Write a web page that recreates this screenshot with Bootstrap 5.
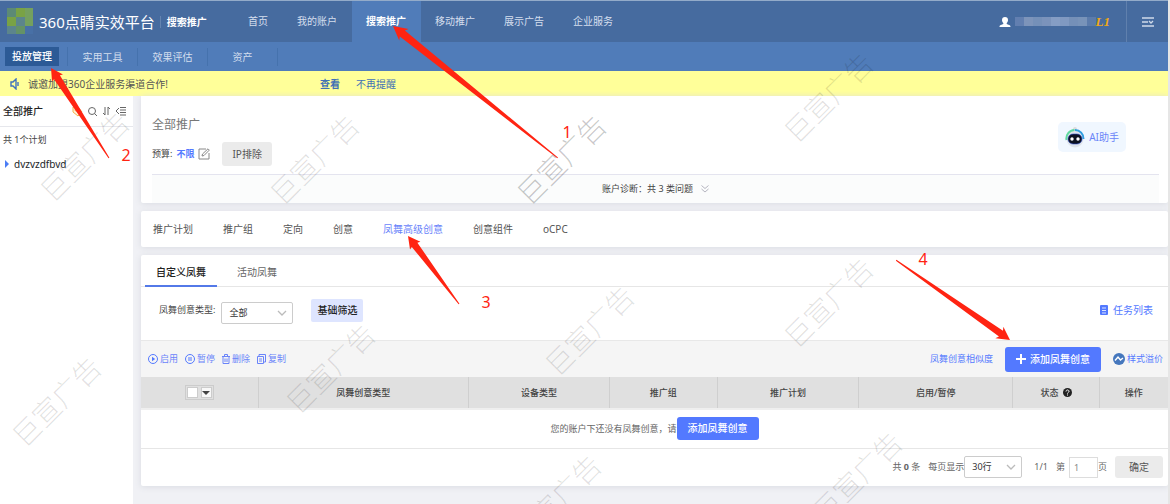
<!DOCTYPE html>
<html lang="zh-CN">
<head>
<meta charset="utf-8">
<meta name="viewport" content="width=device-width, initial-scale=1">
<title>360点睛实效平台</title>
<link href="https://cdn.jsdelivr.net/npm/bootstrap@5.3.0/dist/css/bootstrap.min.css" rel="stylesheet">
<style>
  :root { --blue: #5379ff; --nav: #466b9f; --subnav: #507cb9; --txt: #444; --muted: #666; }
  body { font-family: "Noto Sans", "Noto Sans CJK SC", sans-serif; font-size: 10px; line-height: 14px; color: var(--txt); background: #f0f1f5; }
  a { color: var(--blue); text-decoration: none; }
  button, select, input { font-family: inherit; }
  svg { flex: none; display: block; }
  .page { min-height: 100vh; border-right: 2px solid #e6e6e6; overflow: hidden; }
  .fs-s { font-size: 9px; line-height: 14px; }

  .topbar { background: var(--nav); border-top: 1px solid #93abc9; height: 42px; }
  .brand { width: 234px; padding-left: 7px; color: #fff; }
  .brand-name { font-size: 15px; line-height: 20px; margin-left: 5px; font-weight: 400; white-space: nowrap; }
  .brand-sub { margin-left: 5px; padding-left: 6px; border-left: 1px solid #6484b0; font-weight: 700; line-height: 12px; }
  .topbar .nav-link { color: #d5dfee; padding: 0 14px; line-height: 40px; border-right: 1px solid transparent; }
  .topbar .nav-link.active { background: var(--subnav); color: #fff; font-weight: 700; line-height: 41px; }
  .mosaic span { width: 9px; height: 9px; background: #7590b8; }
  .level { color: #f0a814; font: italic 700 13px/14px "Liberation Serif", serif; }
  .menu-btn { width: 42px; border: 0; border-left: 1px solid #6080ad; background: none; }

  .subbar { background: var(--subnav); height: 29px; }
  .subbar a { color: #d3deee; width: 70px; line-height: 18px; text-align: center; border-right: 1px solid #4572ad; }
  .subbar .first { width: 68px; padding: 0 8px 0 5px; }
  .subbar .first span { display: block; background: #2c5a96; color: #fff; font-weight: 500; line-height: 19px; }

  .notice { background: #ff9; height: 25px; padding-left: 10px; }
  .notice a { color: #4271b5; }
  .notice-text { width: 292px; padding-left: 8px; color: #555; }

  .sidebar { width: 133px; background: #fff; flex: none; }
  .side-head { height: 31px; padding: 0 7px 0 3px; border-bottom: 1px solid #e6e7ec; color: #222; font-weight: 500; }
  .side-count { padding: 6px 3px; }
  .main-col { padding-left: 8px; min-width: 0; }
  .panel { background: #fff; border-radius: 0 0 2px 2px; box-shadow: 0 1px 6px #d9dbe2; }
  .panel + .panel { margin-top: 8px; border-radius: 2px; }
  .summary { height: 78px; padding: 20px 42px 0 11px; }
  .panel-title { font-size: 12px; line-height: 18px; color: #777; }
  .btn-grey { background: #ebebeb; color: #555; font-size: 10px; line-height: 14px; border: 0; border-radius: 3px; padding: 5px 10px; }
  .btn-ai { background: #f0f7ff; color: #6a84f8; font-size: 10px; line-height: 14px; border: 0; border-radius: 5px; padding: 5px 7px; height: 30px; margin-top: 6px; }
  .diag { border-top: 1px solid #e4e4ef; background: #fbfcfc; height: 29px; margin: 0 9px 0 11px; }
  .scope { height: 36px; gap: 30px; padding: 0 12px; }
  .scope a { color: #555; }
  .scope a.active { color: #6a84fa; }
  .kinds { height: 32px; border-bottom: 1px solid #e6e6e6; padding: 0 4px; gap: 9px; }
  .kinds a { color: #666; padding: 0 11px; line-height: 34px; height: 32px; }
  .kinds a.active { color: #222; font-weight: 500; border-bottom: 2px solid #5379e8; }
  .filters { height: 53px; padding: 12px 15px 0 18px; }
  .filters .pick { margin: 3px 18px 0 6px; }
  .form-select.pick { width: 72px; height: 22px; font-size: 9px; line-height: 14px; padding: 3px 18px 3px 7px; color: #333; border: 1px solid #ccc; border-radius: 2px; background-position: right 5px center; background-size: 10px 10px;
    background-image: url("data:image/svg+xml,%3csvg xmlns='http://www.w3.org/2000/svg' viewBox='0 0 10 10'%3e%3cpath fill='none' stroke='%23bbb' stroke-width='1.3' d='M1 3l4 4 4-4'/%3e%3c/svg%3e"); }
  .form-select.rows { width: 58px; }
  .btn-basic { background: #dee5ff; color: #222; font-size: 10px; line-height: 13px; font-weight: 500; border: 0; border-radius: 2px; padding: 5px 6px; }
  .tools { height: 37px; border-top: 1px solid #e8e8e8; background: #f5f5f5; padding: 0 5px 0 7px; }
  .acts { gap: 7px; }
  .tools .act { background: none; border: 0; padding: 0; gap: 2px; color: #6a84fa; font-size: 9px; line-height: 14px; }
  .premium { gap: 2px; }
  .btn-main { background: var(--blue); color: #fff; font-size: 10px; line-height: 13px; font-weight: 500; border: 0; border-radius: 3px; padding: 5px 11px; }
  .btn-main.big { padding: 6px 11px; }
  .grid-table { table-layout: fixed; width: 100%; margin: 0; }
  .grid-table th { height: 32px; background: #e0e0e0; border-right: 1px solid #cfcfcf; border-bottom: 2px solid #efefef; font-size: 9px; line-height: 14px; font-weight: 500; text-align: center; color: #444; padding: 0; }
  .grid-table th:last-child { border-right: 0; }
  .grid-table td { height: 39px; padding: 0; border-bottom: 1px solid #e6e6e6; color: #666; font-size: 9px; }
  .checker { width: 29px; height: 15px; border: 1px solid #ccc; padding: 2px 1px; }
  .checker input { appearance: none; width: 11px; height: 11px; margin: 0; background: #fff; border: 1px solid #ccc; }
  .checker button { width: 11px; height: 11px; padding: 0; border: 1px solid #ccc; background: #f8f8f8; }
  .pager { height: 37px; padding: 0 5px; color: #666; }
  .pager .btn-grey { padding: 4px 14px; }
  .page-no { width: 29px; height: 21px; border: 1px solid #ddd; border-radius: 0; padding: 0 4px; font-size: 9px; color: #888; }

  .overlay-box { position: absolute; inset: 0; overflow: hidden; pointer-events: none; }
  .stamp { font: 300 28px "Noto Sans CJK SC", sans-serif; fill: #000; fill-opacity: .12; text-anchor: middle; }
  .step { font: 16px "Noto Sans", sans-serif; fill: #ff2412; text-anchor: middle; }
</style>
</head>
<body>
<div class="page d-flex flex-column position-relative">
  <header class="topbar d-flex">
    <div class="brand d-flex align-items-center">
      <svg width="27" height="27" viewBox="0 0 27 27"><path fill="#5c8a76" d="M0 0h9v9H0z"/><path fill="#79a245" d="M9 0h9v9H9zM0 9h9v9H0z"/><path fill="#75a05e" d="M18 0h8v18h-8z"/><path fill="#5c858c" d="M9 9h9v9H9zM0 18h9v8H0z"/><path fill="#649267" d="M9 18h9v8H9z"/><path fill="#4870a6" d="M18 18h8v8h-8z"/></svg>
      <span class="brand-name">360点睛实效平台</span><span class="brand-sub">搜索推广</span>
    </div>
    <nav class="d-flex flex-grow-1">
      <a class="nav-link" href="#">首页</a><a class="nav-link" href="#">我的账户</a><a class="nav-link active" href="#">搜索推广</a><a class="nav-link" href="#">移动推广</a><a class="nav-link" href="#">展示广告</a><a class="nav-link" href="#">企业服务</a>
    </nav>
    <div class="d-flex align-items-center me-3">
      <svg width="12" height="12" viewBox="0 0 12 12" fill="#fff"><path d="M6 1c2 0 3 1.300 3 3 0 1.500-.6 2.400-1.300 3v1l3 1.200c.6.300.8.800.8 1.800H.5c0-1 .2-1.500.8-1.800l3-1.200V7C3.600 6.400 3 5.500 3 4c0-1.700 1-3 3-3z"/></svg>
      <div class="mosaic d-flex ms-1">
        <span style="background:#627fb0"></span><span style="background:#7d94ba"></span><span></span><span style="background:#7b93bb"></span><span style="background:#859dc4"></span><span style="background:#8099c1"></span><span></span><span style="background:#7893b9"></span><span style="background:#5b7bab"></span>
      </div>
      <span class="level">L1</span>
    </div>
    <button class="menu-btn d-flex align-items-center justify-content-center" aria-label="菜单"><svg width="12" height="10" viewBox="0 0 12 10" fill="none" stroke="#cfdaea" stroke-width="1.300"><path d="M0 1h12M0 5h6M0 9h12M7 4l2 2 2-2"/></svg></button>
  </header>

  <nav class="subbar d-flex align-items-center">
    <a class="first" href="#"><span>投放管理</span></a><a href="#">实用工具</a><a href="#">效果评估</a><a href="#">资产</a>
  </nav>

  <div class="notice d-flex align-items-center">
    <svg width="10" height="12" viewBox="0 0 10 12" fill="none" stroke="#3f72bd" stroke-width="1.400"><path d="M1 4h2l3-3v10L3 8H1zM8 4v4"/></svg>
    <span class="notice-text">诚邀加盟360企业服务渠道合作!</span>
    <a class="fw-bold ms-2 me-3" href="#">查看</a><a href="#">不再提醒</a>
  </div>

  <div class="d-flex flex-grow-1">
    <aside class="sidebar">
      <div class="side-head d-flex align-items-center">
        <span class="me-auto">全部推广</span>
        <svg class="me-1" width="12" height="12" viewBox="0 0 12 12" fill="#fff4dc" stroke="#f3b24c"><path d="M2 2l5 0 4 5-4 4-5-4z"/><circle cx="5" cy="5" r="1"/></svg>
        <svg class="me-1" width="11" height="11" viewBox="0 0 11 11" fill="none" stroke="#666"><circle cx="5" cy="5" r="3.500"/><path d="M7.500 7.500l2.500 2.500"/></svg>
        <svg class="me-1" width="9" height="10" viewBox="0 0 9 10" fill="none" stroke="#666"><path d="M3 1v8L1 7M6 9V1l2 2"/></svg>
        <svg width="11" height="10" viewBox="0 0 11 10" fill="none" stroke="#666"><path d="M4 2L1 5l3 3M5 1.500h6M5 4h6M5 6.500h6M5 9h6"/></svg>
      </div>
      <div class="fs-s side-count">共 1个计划</div>
      <a href="#" class="d-flex align-items-center ps-1 pt-1 text-dark"><svg class="me-1" width="6" height="8" viewBox="0 0 6 8"><path fill="#4b7df5" d="M1 0l4 4-4 4z"/></svg>dvzvzdfbvd</a>
    </aside>

    <main class="main-col flex-grow-1">
      <section class="panel">
        <div class="summary d-flex justify-content-between align-items-start">
          <div>
            <div class="panel-title">全部推广</div>
            <div class="d-flex align-items-center fs-s mt-2">预算:<a class="fw-bold mx-1" href="#">不限</a>
              <svg class="me-2" width="12" height="12" viewBox="0 0 12 12" fill="none" stroke="#888"><path d="M8 1H1v10h10V5M4 8l.5-2L10 .8l1.300 1.300L6 7.500z"/></svg>
              <button class="btn-grey ms-1">IP排除</button></div>
          </div>
          <button class="btn-ai d-flex align-items-center">
            <svg class="me-1" width="20" height="22" viewBox="0 0 20 22"><circle cx="10" cy="3" r="2" fill="#ddd"/><circle cx="10" cy="13" r="8.500" fill="#dfe4ea"/><path d="M1.500 14a8.500 8.500 0 0 1 8-10" fill="none" stroke="#5fd9a0" stroke-width="2"/><path d="M10 4a8.500 8.500 0 0 1 8.500 9" fill="none" stroke="#2f9ee0" stroke-width="2"/><rect x="3" y="8" width="14" height="10" rx="5" fill="#0b1020" stroke="#2b49c9" stroke-width=".6"/><circle cx="7" cy="13" r="1.700" fill="#fff"/><circle cx="13" cy="13" r="1.700" fill="#fff"/></svg>AI助手</button>
        </div>
        <div class="diag d-flex align-items-center justify-content-center fs-s">账户诊断：共 3 类问题
          <svg class="ms-2" width="8" height="8" viewBox="0 0 8 8" fill="none" stroke="#b5b5c0"><path d="M.5.500L4 3.500 7.500.500M.5 4L4 7l3.500-3"/></svg></div>
      </section>

      <nav class="panel scope d-flex align-items-center">
        <a href="#">推广计划</a><a href="#">推广组</a><a href="#">定向</a><a href="#">创意</a><a class="active" href="#">凤舞高级创意</a><a href="#">创意组件</a><a href="#">oCPC</a>
      </nav>

      <section class="panel">
        <nav class="kinds d-flex"><a class="active" href="#">自定义凤舞</a><a href="#">活动凤舞</a></nav>
        <div class="filters d-flex align-items-start">
          <label class="fs-s pt-1" for="kind">凤舞创意类型:</label>
          <select id="kind" class="form-select pick"><option>全部</option></select>
          <button class="btn-basic">基础筛选</button>
          <a class="ms-auto d-flex align-items-center pt-1" href="#"><svg class="me-1" width="10" height="10" viewBox="0 0 10 10"><rect x="1" width="8" height="10" rx="1" fill="#5379ff"/><path stroke="#fff" d="M3 3h4M3 5.500h4M3 8h4" stroke-width=".8"/></svg>任务列表</a>
        </div>
        <div class="tools d-flex align-items-center">
          <div class="acts d-flex">
            <button class="act d-flex align-items-center"><svg width="10" height="10" viewBox="0 0 10 10" fill="none" stroke="#5379ff"><circle cx="5" cy="5" r="4.500"/><path fill="#5379ff" stroke="none" d="M4 2.800L7.200 5 4 7.200z"/></svg>启用</button>
            <button class="act d-flex align-items-center"><svg width="10" height="10" viewBox="0 0 10 10" fill="none" stroke="#5379ff"><circle cx="5" cy="5" r="4.500"/><path d="M4 3v4M6 3v4"/></svg>暂停</button>
            <button class="act d-flex align-items-center"><svg width="8" height="10" viewBox="0 0 8 10" fill="none" stroke="#6a84fa"><path d="M0 2.500h8M2.500 2V.5h3V2M1 3v6.500h6V3M3 4.500V8M5 4.500V8"/></svg>删除</button>
            <button class="act d-flex align-items-center"><svg width="9" height="10" viewBox="0 0 9 10" fill="none" stroke="#6a84fa"><path d="M2 2V.5h6.500V8H7M.5 2.500h6v7h-6zM2 5h3M2 7h3"/></svg>复制</button>
          </div>
          <a class="fs-s ms-auto me-2" href="#">凤舞创意相似度</a>
          <button class="btn-main big d-flex align-items-center mx-1"><svg class="me-1" width="10" height="10" viewBox="0 0 10 10" stroke="#fff" stroke-width="2"><path d="M5 0v10M0 5h10"/></svg>添加凤舞创意</button>
          <a class="fs-s premium d-flex align-items-center ms-2" href="#"><svg width="12" height="12" viewBox="0 0 12 12"><circle cx="6" cy="6" r="6" fill="#4577bd"/><path d="M2 7.500L5 4l2.500 3L10 5" fill="none" stroke="#fff" stroke-width="1.400"/></svg>样式溢价</a>
        </div>
        <table class="grid-table">
          <colgroup><col style="width:11.4%"><col style="width:20.5%"><col style="width:13.7%"><col style="width:10.5%"><col style="width:13.8%"><col style="width:15%"><col style="width:8.4%"><col style="width:6.7%"></colgroup>
          <thead><tr>
            <th><div class="checker d-flex justify-content-between align-items-center mx-auto"><input type="checkbox" aria-label="全选"><button class="d-flex align-items-center justify-content-center" aria-label="选择范围"><svg width="8" height="4" viewBox="0 0 8 4"><path fill="#444" d="M0 0h8L4 4z"/></svg></button></div></th>
            <th>凤舞创意类型</th><th>设备类型</th><th>推广组</th><th>推广计划</th><th>启用/暂停</th>
            <th><div class="d-flex align-items-center justify-content-center">状态<svg class="ms-1" width="9" height="9" viewBox="0 0 9 9"><circle cx="4.500" cy="4.500" r="4.500" fill="#222"/><path d="M3 3.500C3 1.500 6 1.500 6 3.400 6 4.500 4.500 4.400 4.500 5.600M4.500 6.500v1" fill="none" stroke="#fff"/></svg></div></th>
            <th>操作</th>
          </tr></thead>
          <tbody><tr><td colspan="8"><div class="d-flex align-items-center justify-content-center">您的账户下还没有凤舞创意，请<button class="btn-main">添加凤舞创意</button></div></td></tr></tbody>
        </table>
        <div class="pager d-flex align-items-center justify-content-end fs-s">
          <span>共 <b>0</b> 条</span><label class="ms-2" for="rows">每页显示</label>
          <select id="rows" class="form-select pick rows"><option>30行</option></select>
          <span class="ms-2 me-2 ps-1">1/1</span><label class="me-1" for="pno">第</label><input id="pno" class="page-no" type="text" value="1"><span>页</span>
          <button class="btn-grey ms-2">确定</button>
        </div>
      </section>
    </main>
  </div>
</div>

<!-- Watermark and the numbered tutorial arrows drawn over the page -->
<div class="overlay-box">
<svg width="1170" height="504" viewBox="0 0 1170 504">
  <g class="stamp">
    <text transform="translate(85 157) rotate(-45)" y="10">巨宣广告</text>
    <text transform="translate(315 160) rotate(-45)" y="10">巨宣广告</text>
    <text transform="translate(562 160) rotate(-45)" y="10" fill-opacity=".22">巨宣广告</text>
    <text transform="translate(829 98) rotate(-45)" y="10">巨宣广告</text>
    <text transform="translate(829 303) rotate(-45)" y="10">巨宣广告</text>
    <text transform="translate(590 331) rotate(-45)" y="10">巨宣广告</text>
    <text transform="translate(331 369) rotate(-45)" y="10">巨宣广告</text>
    <text transform="translate(57 402) rotate(-45)" y="10">巨宣广告</text>
    <text transform="translate(557 500) rotate(-45)" y="10">巨宣广告</text>
    <text transform="translate(858 477) rotate(-45)" y="10">巨宣广告</text>
  </g>
  <g fill="#ff2412">
    <path transform="translate(393 26) rotate(38.700)" d="M0 0L14-7.500 12-4 211-.5v1L12 4l2 3.500z"/>
    <path transform="translate(51 68) rotate(57.200)" d="M0 0L12-6.500 11-3.500 107-.5v1L11 3.500l1 3z"/>
    <path transform="translate(408 236) rotate(53.100)" d="M0 0L12-6.500 11-3.500 85-.5v1L11 3.500l1 3z"/>
    <path transform="translate(1010 340) rotate(215)" d="M0 0L13-7 11-3.500 139-.5v1L11 3.500l2 3.500z"/>
  </g>
  <g class="step"><text x="567" y="138">1</text><text x="126" y="161">2</text><text x="486" y="308">3</text><text x="923" y="265">4</text></g>
</svg>
</div>
<script src="https://cdn.jsdelivr.net/npm/bootstrap@5.3.0/dist/js/bootstrap.bundle.min.js"></script>
</body>
</html>
